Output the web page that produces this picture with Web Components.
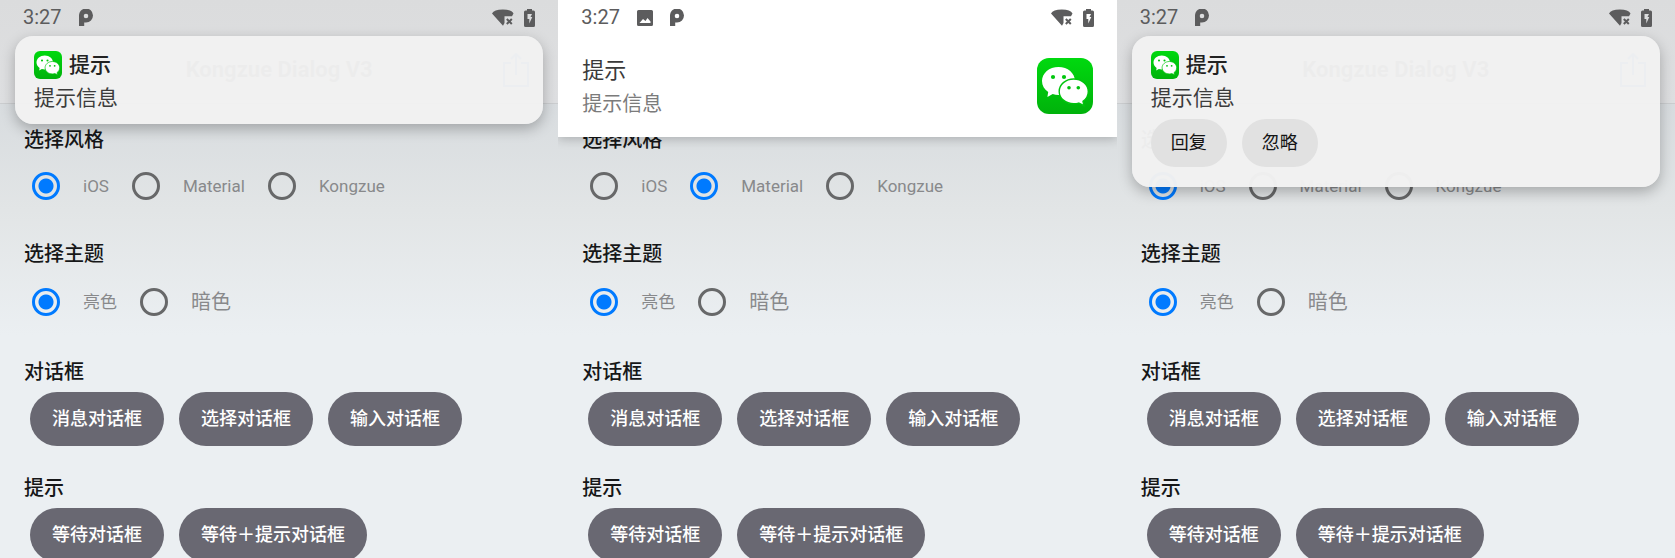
<!DOCTYPE html>
<html lang="zh-CN">
<head>
<meta charset="utf-8">
<title>Kongzue Dialog V3</title>
<style>
  html, body { margin: 0; height: 100%; }
  body { overflow: hidden; font-family: Roboto, "Noto Sans CJK SC", sans-serif; color: #222; background: #ebeff2; }
  main { display: grid; grid-template-columns: repeat(3, minmax(0, 1fr)); height: 100%; }
</style>
</head>
<body>
<main>
  <phone-screen look="0">
    <notice-card slot="notice" heading="提示">提示信息</notice-card>
  </phone-screen>
  <phone-screen look="1" picture>
    <notice-banner slot="notice" heading="提示">提示信息</notice-banner>
  </phone-screen>
  <phone-screen look="0">
    <notice-card slot="notice" heading="提示">提示信息
      <pill-button slot="actions" tone="light">回复</pill-button>
      <pill-button slot="actions" tone="light">忽略</pill-button>
    </notice-card>
  </phone-screen>
</main>

<script>
class Base extends HTMLElement {
  connectedCallback() {
    if (this.shadowRoot) return;
    this.attachShadow({ mode: "open" }).innerHTML = this.view();
  }
}

customElements.define("app-logo", class extends Base {
  view() {
    return `<style>
      :host { display: block; width: 28px; height: 28px; flex: none; }
      svg { display: block; width: 100%; height: 100%; }
    </style>
    <svg viewBox="0 0 56 56" aria-hidden="true">
      <defs><linearGradient id="g" x1="0" y1="0" x2="0" y2="1">
        <stop offset="0" stop-color="#00d90f"/><stop offset="1" stop-color="#00b20b"/></linearGradient></defs>
      <rect width="56" height="56" rx="12" fill="url(#g)"/>
      <path fill="#fff" d="M21.500 9C12.200 9 5 15.200 5 23c0 4.500 2.300 8.300 6.200 10.900L10.400 39l5.300-2.900c1.800.6 3.700.9 5.800.9C30.800 37 38 30.800 38 23S30.800 9 21.500 9z"/>
      <circle cx="16" cy="19" r="2.100" fill="#00c60d"/><circle cx="27" cy="19" r="2.100" fill="#00c60d"/>
      <path fill="#fff" stroke="#00c40d" stroke-width="1.400" d="M36.700 21C28.600 21 22.200 26.600 22.200 33.400S28.600 45.800 36.700 45.800c1.800 0 3.400-.2 5-.7l5.200 2.600-.9-4.400c3.200-2.300 5.300-5.900 5.300-9.900C51.300 26.600 44.800 21 36.700 21z"/>
      <circle cx="32" cy="29.700" r="1.800" fill="#00c00c"/><circle cx="41.300" cy="29.700" r="1.800" fill="#00c00c"/>
    </svg>`;
  }
});

customElements.define("status-bar", class extends Base {
  view() {
    const picture = this.hasAttribute("picture") ? `
      <svg width="16" height="16" viewBox="0 0 16 16"><path fill="currentColor" fill-rule="evenodd" d="M1.500 0h13A1.500 1.500 0 0 1 16 1.500v13a1.500 1.500 0 0 1-1.500 1.500h-13A1.500 1.500 0 0 1 0 14.500v-13A1.500 1.500 0 0 1 1.500 0zM2.500 13h11v-1.500L10.500 8 8.500 11 6 9z"/></svg>` : "";
    return `<style>
      :host { display: flex; align-items: center; height: 35px; padding: 0 23px; box-sizing: border-box; color: #5c5c5d; }
      time { font-size: 20px; line-height: 35px; }
      div { display: flex; align-items: center; gap: 17px; flex: 1; margin-left: 17px; }
      .right { gap: 10px; flex: none; }
      svg { display: block; }
    </style>
    <time>3:27</time>
    <div>${picture}
      <svg width="14" height="17" viewBox="0 0 14 17"><path fill="currentColor" fill-rule="evenodd" d="M0 17V7A7 7 0 1 1 7 13.500H5.200V17zM7 4.700A2.300 2.300 0 1 0 7 9.300 2.300 2.300 0 1 0 7 4.700z"/></svg>
    </div>
    <div class="right">
      <svg width="22" height="18" viewBox="0 0 22 18"><path fill="currentColor" d="M0 4.500Q2 .5 10.800.5T21.500 4.500L20 7.300H12.500V14L11 16.800z"/><path stroke="currentColor" stroke-width="2" d="M14.800 10l5 5m0-5l-5 5"/></svg>
      <svg width="11" height="18" viewBox="0 0 11 18"><path fill="currentColor" fill-rule="evenodd" d="M3 0h5v1.500h1.500A1.500 1.500 0 0 1 11 3v13.500A1.500 1.500 0 0 1 9.500 18h-8A1.500 1.500 0 0 1 0 16.500V3a1.500 1.500 0 0 1 1.500-1.500H3zM3.500 5v5h1.800v4.500L8.300 8H6.500L8 5z"/></svg>
    </div>`;
  }
});

customElements.define("title-bar", class extends Base {
  view() {
    return `<style>
      :host { display: grid; grid-template-columns: 26px 1fr 26px; align-items: center; height: 69px; padding: 2px 29px 0; box-sizing: border-box; border-bottom: 1px solid #cbcdcf; }
      h1 { grid-column: 2; margin: 0; font-size: 22px; line-height: 30px; font-weight: 700; text-align: center; color: #222; }
      button { padding: 0; border: 0; background: none; color: #2a78d8; }
      svg { display: block; }
    </style>
    <h1>Kongzue Dialog V3</h1>
    <button aria-label="分享"><svg width="26" height="34" viewBox="0 0 26 34" fill="none" stroke="currentColor" stroke-width="2"><path d="M8 10H1v23h24V10h-7M13 22V1M8 6l5-5 5 5"/></svg></button>`;
  }
});

customElements.define("radio-group", class extends Base {
  view() {
    const picked = Number(this.getAttribute("selected"));
    const items = this.getAttribute("options").split(",").map((text, i) =>
      `<input type="radio" name="r" id="r${i}" ${i === picked ? "checked" : ""}><label for="r${i}">${text}</label>`).join("");
    return `<style>
      :host { display: flex; align-items: center; gap: 23px; height: 62px; padding-left: 32px; }
      :host([tall]) { height: 66px; }
      input { appearance: none; flex: none; box-sizing: border-box; width: 28px; height: 28px; margin: 0; border: 3px solid #676869; border-radius: 50%; }
      input:checked { border-color: #007aff; background: radial-gradient(circle, #007aff 0 7px, transparent 8px); }
      label { font-size: 17px; line-height: 28px; color: #88898b; }
      :host([tall]) label:last-child { font-size: 20px; }
    </style>${items}`;
  }
});

customElements.define("pill-button", class extends Base {
  view() {
    return `<style>
      :host { display: block; }
      button { display: block; height: 54px; padding: 0 22px; border: 0; border-radius: 27px; background: #696872; color: #fff; font: 500 18px/26px Roboto, "Noto Sans CJK SC", sans-serif; white-space: nowrap; }
      :host([tone="light"]) button { height: 48px; padding: 0 20px; background: #e1e1e1; color: #151515; font-weight: 400; }
    </style><button type="button"><slot></slot></button>`;
  }
});

customElements.define("demo-section", class extends Base {
  view() {
    return `<style>
      :host { display: block; margin-bottom: 27px; }
      h2 { margin: 0 0 0 24px; font-size: 20px; line-height: 30px; font-weight: 500; color: #161718; }
      .row { display: flex; gap: 15px; padding: 5px 0 0 30px; }
      :host([flush]) { margin-bottom: 22px; }
      :host([flush]) .row { display: block; padding: 0; }
    </style><h2>${this.getAttribute("heading")}</h2><div class="row"><slot></slot></div>`;
  }
});

customElements.define("notice-card", class extends Base {
  view() {
    const actions = this.querySelector("[slot=actions]") ? `<footer><slot name="actions"></slot></footer>` : "";
    return `<style>
      :host { position: absolute; top: 36px; left: 15px; right: 15px; box-sizing: border-box; padding: 14px 19px 12px; border-radius: 18px; background: rgba(241, 241, 241, .98); box-shadow: 0 5px 14px rgba(0, 0, 0, .26); }
      header { display: flex; align-items: center; gap: 7px; margin-bottom: 4px; }
      h3 { margin: 0; font-size: 21px; line-height: 30px; font-weight: 500; color: #222; }
      p { margin: 0; font-size: 21px; line-height: 28px; color: #3c3c3c; }
      footer { display: flex; gap: 15px; padding: 7px 0 8px; }
    </style>
    <header><app-logo></app-logo><h3>${this.getAttribute("heading")}</h3></header>
    <p><slot></slot></p>${actions}`;
  }
});

customElements.define("notice-banner", class extends Base {
  view() {
    return `<style>
      :host { position: absolute; top: 0; left: 0; right: 0; display: flex; align-items: flex-start; justify-content: space-between; box-sizing: border-box; padding: 54px 24px 16px; background: #fff; box-shadow: 0 2px 10px rgba(0, 0, 0, .22); }
      h3 { margin: 0; font-size: 22px; line-height: 33px; font-weight: 400; color: #3a3a3a; }
      p { margin: 1px 0 0; font-size: 20px; line-height: 33px; color: #7b7b7b; }
      app-logo { width: 56px; height: 56px; margin-top: 4px; }
    </style>
    <div><h3>${this.getAttribute("heading")}</h3><p><slot></slot></p></div><app-logo></app-logo>`;
  }
});

customElements.define("phone-screen", class extends Base {
  view() {
    return `<style>
      :host { display: block; position: relative; overflow: hidden; background: linear-gradient(#d8dcdf 104px, #e2e5e6 210px, #ebeff2 335px); }
      .top { background: linear-gradient(#dbdcdd, #dedfe1); }
      status-bar { position: relative; z-index: 2; }
      .body { padding-top: 21px; }
    </style>
    <div class="top">
      <status-bar ${this.hasAttribute("picture") ? "picture" : ""}></status-bar>
      <title-bar></title-bar>
    </div>
    <div class="body">
      <demo-section heading="选择风格" flush><radio-group options="iOS,Material,Kongzue" selected="${this.getAttribute("look")}"></radio-group></demo-section>
      <demo-section heading="选择主题" flush><radio-group tall options="亮色,暗色" selected="0"></radio-group></demo-section>
      <demo-section heading="对话框"><pill-button>消息对话框</pill-button><pill-button>选择对话框</pill-button><pill-button>输入对话框</pill-button></demo-section>
      <demo-section heading="提示"><pill-button>等待对话框</pill-button><pill-button>等待＋提示对话框</pill-button></demo-section>
    </div>
    <slot name="notice"></slot>`;
  }
});
</script>
</body>
</html>
